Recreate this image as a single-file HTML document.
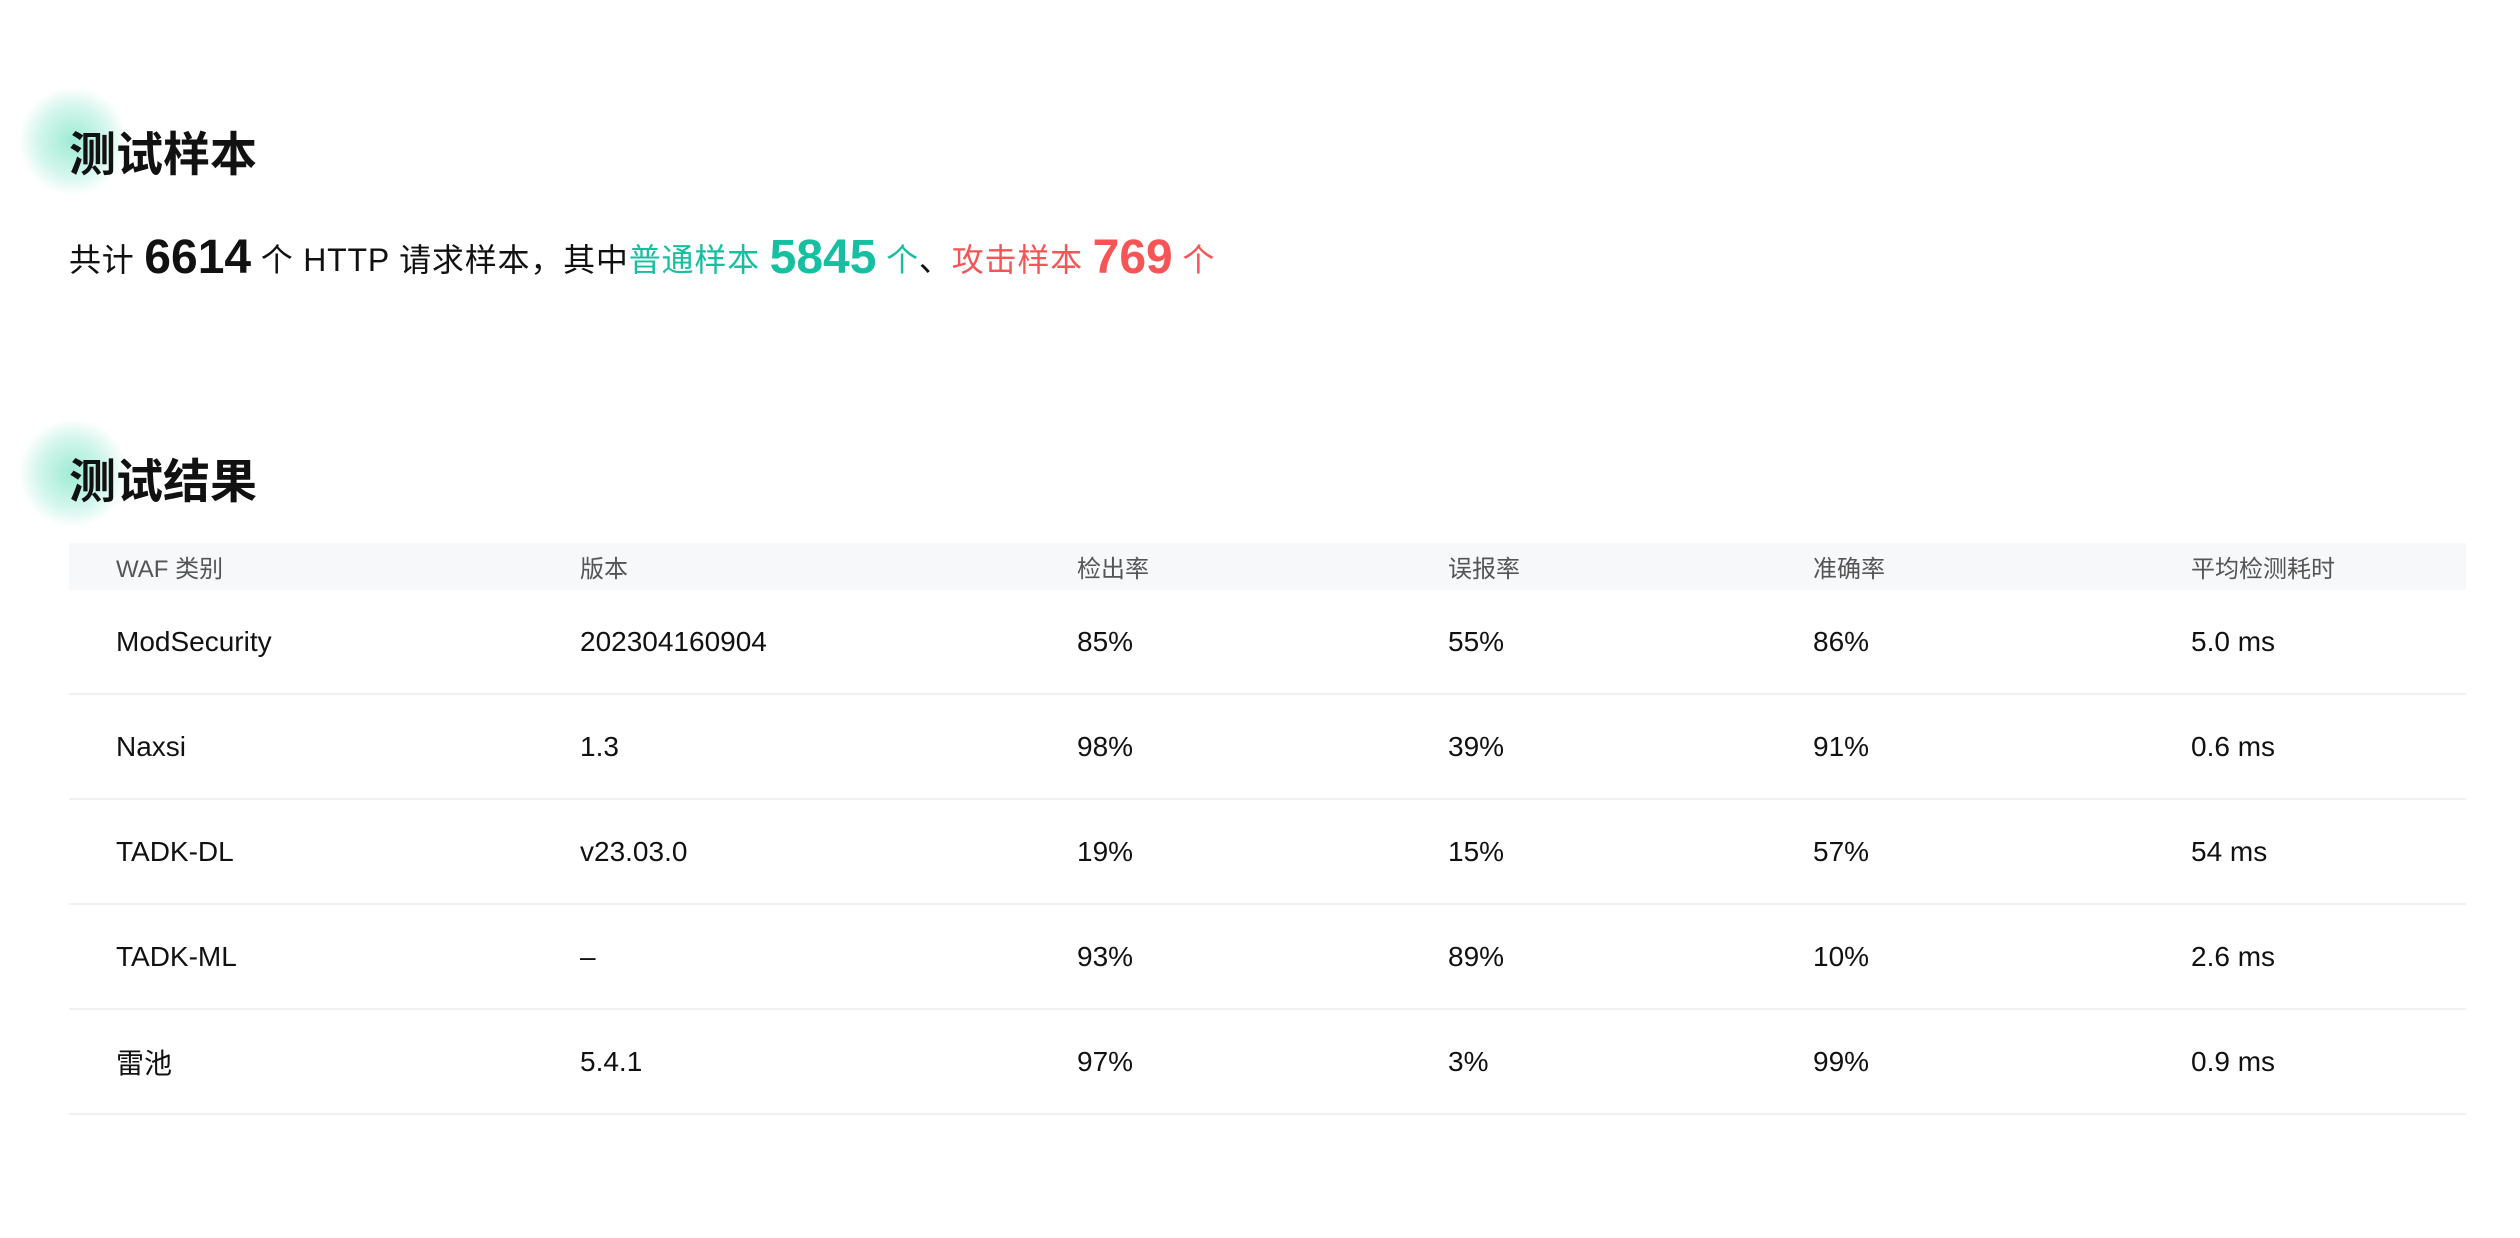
<!DOCTYPE html>
<html><head><meta charset="utf-8"><style>
html,body{margin:0;padding:0;background:#fff;width:2520px;height:1238px;overflow:hidden;font-family:"Liberation Sans","Noto Sans CJK SC",sans-serif;color:#111}
.glow{position:absolute;width:110px;height:110px;border-radius:50%;background:radial-gradient(circle,rgba(60,215,170,.5) 0%,rgba(60,215,170,.22) 45%,rgba(60,215,170,0) 70%)}
h2{position:absolute;left:69px;margin:0;font-size:47px;font-weight:bold;line-height:60px;font-family:"Noto Sans CJK SC",sans-serif}
.line{position:absolute;left:69px;top:226px;font-size:32px;letter-spacing:0.8px;line-height:64px;white-space:nowrap;font-family:"Liberation Sans","Noto Sans CJK SC",sans-serif}
.big{font-size:48px;font-weight:bold;vertical-align:-2px;letter-spacing:0}
.g{color:#16bfa0}.r{color:#f75555}
table{position:absolute;left:69px;top:543px;width:2397px;border-collapse:collapse;table-layout:fixed}
th{background:#f7f8fa;height:47px;font-weight:normal;font-size:24px;color:#555;text-align:left;padding:0}
td{height:103px;border-bottom:2px solid #f0f0f0;font-size:28px;padding:0;color:#111}
th:first-child,td:first-child{padding-left:47px}
</style></head><body>
<div class="glow" style="left:18px;top:86px"></div>
<h2 style="top:121px">测试样本</h2>
<div class="line">共计 <span class="big">6614</span> 个 HTTP 请求样本，其中<span class="g">普通样本 <span class="big">5845</span>  个</span>、<span class="r">攻击样本 <span class="big">769</span> 个</span></div>
<div class="glow" style="left:18px;top:418px"></div>
<h2 style="top:448px">测试结果</h2>
<table>
<colgroup><col style="width:511px"><col style="width:497px"><col style="width:371px"><col style="width:365px"><col style="width:378px"><col></colgroup>
<tr><th>WAF 类别</th><th>版本</th><th>检出率</th><th>误报率</th><th>准确率</th><th>平均检测耗时</th></tr>
<tr><td>ModSecurity</td><td>202304160904</td><td>85%</td><td>55%</td><td>86%</td><td>5.0 ms</td></tr>
<tr><td>Naxsi</td><td>1.3</td><td>98%</td><td>39%</td><td>91%</td><td>0.6 ms</td></tr>
<tr><td>TADK-DL</td><td>v23.03.0</td><td>19%</td><td>15%</td><td>57%</td><td>54 ms</td></tr>
<tr><td>TADK-ML</td><td>–</td><td>93%</td><td>89%</td><td>10%</td><td>2.6 ms</td></tr>
<tr><td>雷池</td><td>5.4.1</td><td>97%</td><td>3%</td><td>99%</td><td>0.9 ms</td></tr>
</table>
</body></html>
